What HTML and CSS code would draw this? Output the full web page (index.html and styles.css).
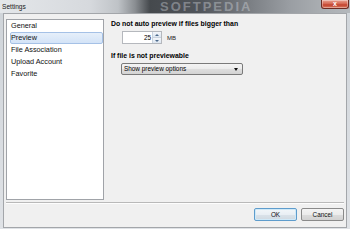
FILE: index.html
```html
<!DOCTYPE html>
<html>
<head>
<meta charset="utf-8">
<title>Settings</title>
<link rel="stylesheet" href="styles.css">
</head>
<body>
<div class="window">
  <div class="titlebar">
    <span class="title">Settings</span>
    <span class="watermark">SOFTPEDIA</span>
    <div class="close"><span>x</span></div>
  </div>
  <div class="client">
    <div class="main">
      <ul class="list">
        <li class="item">General</li>
        <li class="item selected">Preview</li>
        <li class="item">File Association</li>
        <li class="item">Upload Account</li>
        <li class="item">Favorite</li>
      </ul>
      <div class="pane">
        <div class="heading">Do not auto preview if files bigger than</div>
        <div class="spinrow">
          <div class="spin">
            <div class="spinval">25</div>
            <div class="spinbtns">
              <div class="sbtn"><span class="tri up"></span></div>
              <div class="sbtn"><span class="tri down"></span></div>
            </div>
          </div>
          <span class="unit">MB</span>
        </div>
        <div class="heading h2">If file is not previewable</div>
        <div class="select">
          <span class="seltext">Show preview options</span>
          <span class="tri down dark"></span>
        </div>
      </div>
    </div>
    <div class="sep"></div>
    <div class="buttons">
      <div class="btn default">OK</div>
      <div class="btn">Cancel</div>
    </div>
  </div>
</div>
</body>
</html>
```
FILE: styles.css
```css
html, body {
  margin: 0;
  padding: 0;
}
body {
  width: 350px;
  height: 229px;
  overflow: hidden;
  background: #d9dde2;
  font-family: "Liberation Sans", Arial, sans-serif;
  color: #000;
}
.window {
  width: 350px;
  height: 229px;
  display: flex;
  flex-direction: column;
  background: linear-gradient(to bottom, #cfd4d9, #dfe2e6);
}
.titlebar {
  position: relative;
  height: 13px;
  display: flex;
  align-items: flex-start;
  background: linear-gradient(to right, #e4e7ea 0, #d6d9dd 90px, #bfc3c7 118px, #8a8e92 135px, #45494d 150px, #50545a 200px, #7b7f84 250px, #9a9ea3 290px, #a9adb1 320px, #b4b8bc 350px);
  overflow: hidden;
}
.title {
  font-size: 6.6px;
  line-height: 13px;
  padding-left: 2px;
  color: #1a1a1a;
}
.watermark {
  position: absolute;
  left: 160px;
  top: 0;
  font-size: 13px;
  font-weight: bold;
  letter-spacing: 2px;
  color: rgba(215, 219, 224, 0.4);
  line-height: 13px;
}
.close {
  margin-left: auto;
  margin-right: 1px;
  width: 28px;
  height: 9px;
  box-sizing: border-box;
  border: 1px solid #6e2b22;
  border-top: none;
  border-radius: 0 0 3px 3px;
  background: linear-gradient(to bottom, #e9a493, #d4624c 50%, #c2412c 60%, #d9785f);
  display: flex;
  align-items: center;
  justify-content: center;
  box-shadow: inset 0 0 0 1px rgba(255,255,255,0.35);
}
.close span {
  color: #fff;
  font-size: 7px;
  font-weight: bold;
  line-height: 8px;
}
.client {
  margin: 0 3px 0 3px;
  height: 215px;
  box-sizing: border-box;
  border: 1px solid #a3a6aa;
  background: #f0f0f0;
  padding: 5px 2px 0 2px;
  display: flex;
  flex-direction: column;
}
.main {
  display: flex;
  height: 181px;
}
.list {
  margin: 0;
  padding: 0;
  list-style: none;
  width: 98px;
  height: 181px;
  box-sizing: border-box;
  border: 1px solid #a0a3a8;
  background: #fff;
}
.item {
  height: 12px;
  line-height: 12px;
  font-size: 7.3px;
  margin-left: 3px;
  padding-left: 1px;
  box-sizing: border-box;
  color: #111;
  white-space: nowrap;
}
.item.selected {
  border: 1px solid #a5c1e6;
  border-radius: 2px;
  line-height: 10px;
  padding-left: 0;
  background: linear-gradient(to bottom, #e6effa, #d3e3f7);
}
.pane {
  margin-left: 7px;
  display: flex;
  flex-direction: column;
}
.heading {
  font-size: 6.9px;
  font-weight: bold;
  line-height: 10px;
  white-space: nowrap;
}
.h2 {
  margin-top: 7px;
}
.spinrow {
  margin-top: 2px;
  margin-left: 11px;
  display: flex;
  align-items: center;
  height: 13px;
}
.spin {
  display: flex;
  height: 13px;
  width: 40px;
  box-sizing: border-box;
  border: 1px solid #b5b8bd;
  background: #fff;
}
.spinval {
  flex: 1;
  font-size: 6.4px;
  line-height: 11px;
  text-align: right;
  padding-right: 1px;
}
.spinbtns {
  width: 8px;
  display: flex;
  flex-direction: column;
  border-left: 1px solid #c9d3de;
}
.sbtn {
  flex: 1;
  display: flex;
  align-items: center;
  justify-content: center;
  background: linear-gradient(to bottom, #f3f6fa, #dde6f0);
  border-bottom: 1px solid #c9d3de;
}
.sbtn:last-child {
  border-bottom: none;
}
.tri {
  width: 0;
  height: 0;
  border-left: 2px solid transparent;
  border-right: 2px solid transparent;
}
.tri.up {
  border-bottom: 2px solid #4d6a8c;
}
.tri.down {
  border-top: 2px solid #4d6a8c;
}
.unit {
  margin-left: 5px;
  font-size: 6px;
  color: #222;
}
.select {
  margin-top: 2px;
  margin-left: 10px;
  width: 122px;
  height: 12px;
  box-sizing: border-box;
  border: 1px solid #7a7a7a;
  border-radius: 2px;
  background: linear-gradient(to bottom, #f4f4f4, #ebebeb 50%, #dedede 51%, #d3d3d3);
  display: flex;
  align-items: center;
  padding: 0 4px 0 2px;
}
.seltext {
  font-size: 6.4px;
  line-height: 10px;
  white-space: nowrap;
}
.tri.down.dark {
  margin-left: auto;
  border-left-width: 2.5px;
  border-right-width: 2.5px;
  border-top: 3px solid #111;
}
.sep {
  margin-top: 2px;
  border-top: 1px solid #b9b9b9;
  border-bottom: 1px solid #fdfdfd;
  box-sizing: border-box;
  height: 2px;
}
.buttons {
  margin-top: 4px;
  display: flex;
  justify-content: flex-end;
  gap: 4px;
}
.btn {
  width: 43px;
  height: 13px;
  box-sizing: border-box;
  border: 1px solid #8a8a8a;
  border-radius: 2px;
  background: linear-gradient(to bottom, #f4f4f4, #ececec 50%, #dddddd 51%, #d2d2d2);
  font-size: 6.4px;
  line-height: 11px;
  text-align: center;
  color: #111;
}
.btn.default {
  border-color: #5e9ccc;
  box-shadow: inset 0 0 0 1px #cfe9f8;
  background: linear-gradient(to bottom, #f2f6f9, #e9eff4 50%, #dbe3ea 51%, #d0d9e1);
}
```
